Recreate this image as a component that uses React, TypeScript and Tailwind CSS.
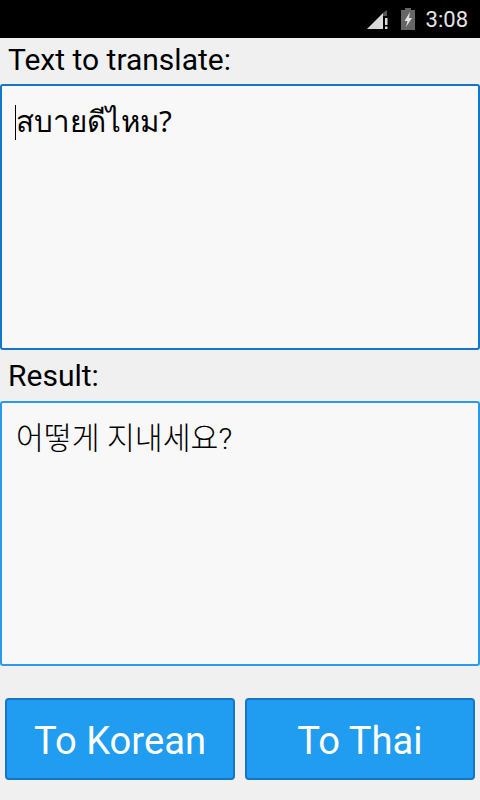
const App = () => {
  return (
    <div className="flex flex-col w-[480px] h-[800px] overflow-hidden bg-[#f0f0f0] font-['Roboto','Noto_Sans_CJK_KR',sans-serif] text-black">
      {/* status bar */}
      <div className="flex items-center justify-end h-[38px] bg-black shrink-0 pr-[12px]">
        <svg width="22" height="20" viewBox="0 0 22 20" className="mr-[12px] mt-[1px]">
          <path d="M0 19 L16 3 V19 Z" fill="#d8d8d8" />
          <path d="M16 3 L20 0 V6 H16 Z" fill="#555555" />
          <rect x="18" y="8" width="2.5" height="7" fill="#d8d8d8" />
          <rect x="18" y="16.5" width="2.5" height="2.5" fill="#d8d8d8" />
        </svg>
        <svg width="14" height="22" viewBox="0 0 14 22" className="mr-[11px]">
          <rect x="4" y="0" width="6" height="2" fill="#666666" />
          <rect x="0" y="2" width="14" height="20" fill="#666666" />
          <path d="M9 4 L3.5 13 H6.5 L5 19 L11 10 H8 Z" fill="#e4e4e4" />
        </svg>
        <span className="text-[22px] leading-none text-[#e4e4e4] mt-[1px]">3:08</span>
      </div>

      <div className="h-[46px] shrink-0 pl-[8px] pt-[5px] text-[30px] leading-[34px]">Text to translate:</div>
      <div className="relative h-[266px] shrink-0 rounded-[3px] border-2 border-[#1576c8] bg-[#f8f8f8] pl-[14px] pt-[15px] text-[29.5px] leading-[40px] font-['Noto_Sans','Noto_Sans_CJK_KR','DejaVu_Sans',sans-serif]">
        <span className="absolute left-[13px] top-[19px] w-[1px] h-[35px] bg-black" />
        สบายดีไหม?
      </div>

      <div className="h-[51px] shrink-0 pl-[8px] pt-[9px] text-[30px] leading-[34px]">Result:</div>
      <div className="h-[265px] shrink-0 rounded-[3px] border-2 border-[#2a9bea] bg-[#f8f8f8] pl-[14px] pt-[16px] text-[30.3px] leading-[40px] font-light">
        어떻게 지내세요?
      </div>

      <div className="flex gap-[10px] px-[5px] pt-[32px]">
        <button className="flex-1 h-[82px] rounded-[4px] border-2 border-[#1576c8] bg-[#209cf0] pt-[5px] text-white text-[38.2px]">To Korean</button>
        <button className="flex-1 h-[82px] rounded-[4px] border-2 border-[#1576c8] bg-[#209cf0] pt-[5px] text-white text-[38.2px]">To Thai</button>
      </div>
    </div>
  )
}

export default App
